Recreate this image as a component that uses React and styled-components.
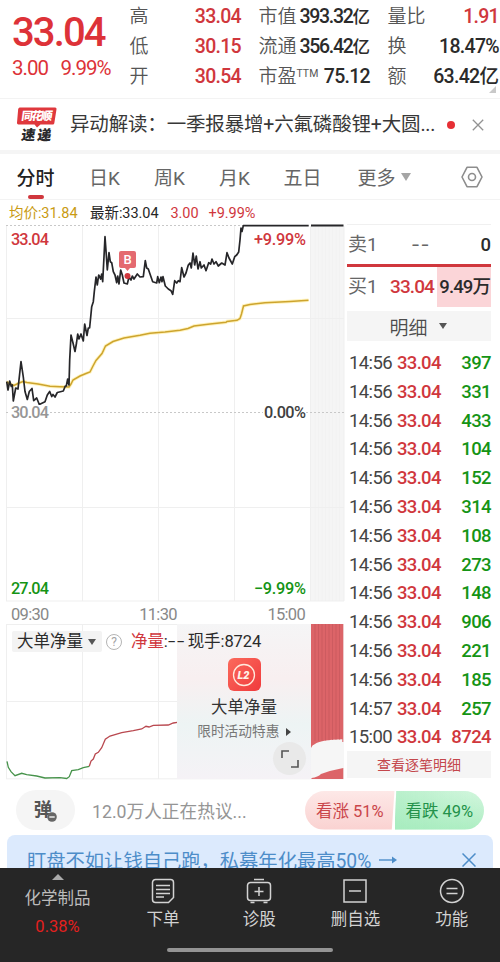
import React from 'react';
import styled, { createGlobalStyle } from 'styled-components';

const RED = '#d0373d';
const GREEN = '#159415';

const quotes = [
    [
        { label: '高', value: '33.04', color: RED },
        { label: '低', value: '30.15', color: RED },
        { label: '开', value: '30.54', color: RED },
    ],
    [
        { label: '市值', value: '393.32', unit: '亿', tight: true },
        { label: '流通', value: '356.42', unit: '亿', tight: true },
        { label: '市盈', sup: 'TTM', value: '75.12' },
    ],
    [
        { label: '量比', value: '1.91', color: RED },
        { label: '换', value: '18.47%' },
        { label: '额', value: '63.42', unit: '亿' },
    ],
];

const trades = [
    ['14:56', '397'], ['14:56', '331'], ['14:56', '433'], ['14:56', '104'],
    ['14:56', '152'], ['14:56', '314'], ['14:56', '108'], ['14:56', '273'],
    ['14:56', '148'], ['14:56', '906'], ['14:56', '221'], ['14:56', '185'],
    ['14:57', '257'], ['15:00', '8724'],
];

const pricePoints = `6.7,381.7 8,390 9.7,381 11.3,386.5 12.3,385 13.3,401 15.7,388 18,389 21,361.5 23.3,377 25,391.5
27.3,399.5 29.3,391.5 32,388.5 33.7,400.7 36.7,398 39.3,404.5 45,401.7 47.3,395 49.7,391.5 51.7,396.5 53,394.5 55,397
57.3,392.5 63.3,391 65.3,386 66.3,386 67.7,379 69,385 69.7,360 71,335 73,343 75,351.5 76.5,343 77.7,334 79,339 81,334
83.3,341 84.7,324 87,335.5 88.3,328 89.6,328 90.7,317 91.7,306.7 93.3,301.7 94.3,291.7 96,277 97.3,285 98.7,275
100.7,279 101.7,274 102.7,281.7 104,256.7 105,236.7 106.3,255 107.3,270 109,252.7 110.3,261.7 111.7,262.7 113.3,271.7
115,275 116.7,282.7 117.7,276 119,284 120.7,270 122.3,275 124,283 127.3,284 129,277 131,280 132.3,276 134,279
137.3,274 140,277 143.3,276.7 145.3,260.7 146.7,268 148.3,269 150.7,276 152.7,281.7 156.7,283 157.7,276.7
159.3,282.7 161,277 162,281.7 163,276.7 165.3,286 168.3,289 171,290.7 172.7,294.3 174.7,280.7 176.7,283 178.3,280.7
180,281.7 181.7,267.7 184,277 186,273 188.3,265 190,263 191.3,268 193,253 194.7,265 196.3,256 198,269 200,261.7
201.3,268 204,265 206,270.7 208.7,262.7 210.7,264 212,259 214,264 216,261.7 218.3,266 221.7,263 225,265 227,252.7
229,258 232.3,264 234.7,256.7 236.7,255 238.7,252 240,240 241,228 242,231.5 243.3,225.6 308.7,225.6`;

const averagePoints = `6.7,381.7 9,383.5 14,385.5 19,383 23,381.5 27,382.5 38,384 50,386.3 60,386.7 69,387 71,384 73,380
80,376 86,373.5 90,372 93,366 96,360.5 102,353.5 105.5,346 113,341.5 124,338 140,335.3 150,333.3 165,332 180,330.3
188,328.5 194,326 210,324 226,322.3 227,321.5 237,320.3 240,318.5 241.5,314 243.5,306 250,304.5 265,302.7 290,301.5 308.5,300.3`;

const netGreen = `7,761.3 8.3,767.3 11,771.7 15,775.7 21.7,773.3 26.7,774.7 36.7,776 45,778 60,777.7 66.7,778.5 69.3,776.7
71.7,770.7 78.3,769.7 83.3,767.7 89.3,766.3`;

const netRed = `89.3,766.3 91,761 93.3,759 95.3,754 98.3,752.3 101.7,747.7 105.3,739.3 110,736 121.7,732.7 133.3,730.7
141.7,729 146,726.3 149,727 153.3,725.3 168.3,725 173.3,723 177.3,722.3`;

const stripes = [315, 318.5, 322, 325.5, 329, 332.5, 336, 339.5];

function PriceChart() {
    return (
        <Plot viewBox="0 225 345 376" height="376">
            <rect x="311" y="226" width="33" height="375" fill="#f5f5f5" />
            {stripes.map(x => <path key={x} d={`M${x} 227V601`} stroke="#f1f1f1" strokeWidth=".8" />)}
            <g stroke="#efefef" strokeWidth="1">
                {[6.5, 82.5, 158.5, 234.5, 310.5, 344].map(x => <path key={x} d={`M${x} 226V601`} />)}
                <path d="M6 318.5H344M6 507.5H344M6 601H344" />
            </g>
            <g stroke="#c8c8c8" strokeDasharray="2 2">
                <path d="M6 225.5H244" />
                <path d="M6 412.5H344" />
            </g>
            <polyline points={averagePoints} fill="none" stroke="#fff3bf" strokeWidth="3.4" />
            <polyline points={averagePoints} fill="none" stroke="#cda42e" strokeWidth="1.5" />
            <polyline points={pricePoints} fill="none" stroke="#262629" strokeWidth="1.7" strokeLinejoin="round" />
            <path d="M311 225.6H343.5" stroke="#262629" strokeWidth="2" />
            <circle cx="127.5" cy="276" r="3" fill={RED} />
            <path d="M121 251h13a2 2 0 0 1 2 2v13a2 2 0 0 1-2 2h-4l-2.5 3-2.5-3h-4a2 2 0 0 1-2-2v-13a2 2 0 0 1 2-2z" fill="#e46a70" />
            <ChartText x="127.5" y="264.2" $size={13} textAnchor="middle" fill="#fff">B</ChartText>
            <ChartText x="11" y="245" textLength="38" fill={RED}>33.04</ChartText>
            <ChartText x="306" y="245" textLength="52" textAnchor="end" fill={RED}>+9.99%</ChartText>
            <rect x="10" y="405" width="40" height="14" fill="#fff" />
            <rect x="263" y="405" width="43" height="14" fill="#fff" />
            <ChartText x="11" y="417.5" textLength="38" fill="#969696">30.04</ChartText>
            <ChartText x="306" y="417.5" textLength="42" textAnchor="end" fill="#404040">0.00%</ChartText>
            <ChartText x="11" y="594" textLength="38" fill={GREEN}>27.04</ChartText>
            <ChartText x="306" y="594" textLength="52" textAnchor="end" fill={GREEN}>−9.99%</ChartText>
        </Plot>
    );
}

function NetChart() {
    return (
        <Plot viewBox="0 624 345 155" height="155">
            <g stroke="#efefef">
                {[6.5, 82.5, 158.5].map(x => <path key={x} d={`M${x} 624V779`} />)}
                <path d="M6 624.5H178M6 701.5H178M6 778.8H344" />
            </g>
            <rect x="311" y="624" width="33" height="155" fill="#f6f6f6" />
            <path d="M311 624H343.3V742H342.3V739.3Q320 740 315 744Q312 745 311 748Z" fill="#dc6468" />
            <path d="M311.5 779V778Q318 777 321 774Q332 770 343.3 768V779Z" fill="#dc6468" />
            {stripes.map((x, i) => (
                <path key={x} d={`M${x} 624V${741 - i * 0.2}`} stroke="#c5585d" strokeWidth=".7" />
            ))}
            <polyline points={netGreen} fill="none" stroke="#47934b" strokeWidth="1.3" />
            <polyline points={netRed} fill="none" stroke="#b9484f" strokeWidth="1.3" />
        </Plot>
    );
}

function NewsLogo() {
    return (
        <svg width="42" height="38" viewBox="0 0 42 38">
            <path d="M3.5 1.5H39a1.5 1.5 0 0 1 1.5 1.8L38.3 17.2a1.5 1.5 0 0 1-1.5 1.3H24.5L21 21.5 18.5 18.5H2.5A1.5 1.5 0 0 1 1 16.8L2.2 2.8z" fill="#df383d" />
            <LogoText x="7" y="14.5" textLength="31" fontSize="11.5" transform="skewX(-8)" fill="#fff">同花顺</LogoText>
            <LogoText x="9.5" y="34" textLength="30" fontSize="14" transform="skewX(-8)" fill="#29292b">速递</LogoText>
        </svg>
    );
}

const navItems = [
    {
        text: '下单',
        icon: <path d="M4.5 1.5h15a3 3 0 0 1 3 3v15l-5 5h-13a3 3 0 0 1-3-3v-17a3 3 0 0 1 3-3zM5 7.5h14M5 11.5h14M5 15.5h14M5 19h8" />,
    },
    {
        text: '诊股',
        icon: <path d="M3.5 4.5h17a3 3 0 0 1 3 3v12a3 3 0 0 1-3 3h-17a3 3 0 0 1-3-3v-12a3 3 0 0 1 3-3zM7 1.5h10M3.5 24.5h4M16.5 24.5h4M12 9v9M7.5 13.5h9" />,
    },
    {
        text: '删自选',
        icon: <path d="M1 2h22v22H1zM6 13h12" />,
    },
    {
        text: '功能',
        icon: <path d="M12 1.5a11.5 11.5 0 1 1 0 23 11.5 11.5 0 0 1 0-23zM6.5 10.5h11M6.5 15.5h11" />,
    },
];

export default function App() {
    return (
        <Page>
            <GlobalStyle />
            <Header>
                <Current>
                    <BigPrice>33.04</BigPrice>
                    <Change><span>3.00</span><span>9.99%</span></Change>
                </Current>
                {quotes.map((column, i) => (
                    <QuoteColumn key={i}>
                        {column.map(q => (
                            <QuoteRow key={q.label}>
                                <QuoteLabel>{q.label}{q.sup && <sup>{q.sup}</sup>}</QuoteLabel>
                                <QuoteValue $color={q.color} $tight={q.tight}>{q.value}{q.unit && <em>{q.unit}</em>}</QuoteValue>
                            </QuoteRow>
                        ))}
                    </QuoteColumn>
                ))}
                <Corner />
            </Header>

            <News>
                <NewsLogo />
                <NewsText>异动解读：一季报暴增+六氟磷酸锂+大圆...</NewsText>
                <Dot />
                <svg width="12" height="12" viewBox="0 0 12 12" stroke="#929292" strokeWidth="1.3">
                    <path d="M.8.8l10.4 10.4M11.2.8L.8 11.2" />
                </svg>
            </News>

            <Tabs>
                <Tab $w={71} $active>分时</Tab>
                <Tab $w={67}>日K</Tab>
                <Tab $w={63}>周K</Tab>
                <Tab $w={67}>月K</Tab>
                <Tab $w={69}>五日</Tab>
                <Tab $w={94}>更多<Triangle $size={5.5} $color="#a5a5a5" /></Tab>
                <Settings>
                    <svg width="22" height="22" viewBox="0 0 22 22" fill="none" stroke="#8d8d8d" strokeWidth="1.6">
                        <path d="M6 1.3h10L21 11l-5 9.7H6L1 11z" strokeLinejoin="round" />
                        <circle cx="11" cy="11" r="3.5" />
                    </svg>
                </Settings>
            </Tabs>

            <Main>
                <Charts>
                    <Summary>
                        <SummaryItem $w={81} $color="#c99b12">均价:31.84</SummaryItem>
                        <SummaryItem $w={80.5} $color="#262626">最新:33.04</SummaryItem>
                        <SummaryItem $w={38} $color={RED}>3.00</SummaryItem>
                        <SummaryItem $color={RED}>+9.99%</SummaryItem>
                    </Summary>
                    <PriceChart />
                    <TimeAxis><span>09:30</span><span>11:30</span><span>15:00</span></TimeAxis>
                    <NetPanel>
                        <NetChart />
                        <Promo>
                            <PromoIcon>
                                <svg width="24" height="24" viewBox="0 0 24 24">
                                    <circle cx="12" cy="12" r="10.5" fill="none" stroke="#ffe9dc" strokeWidth="1.3" />
                                    <text x="11.5" y="16" textAnchor="middle" fontSize="11" fontWeight="900" fontStyle="italic" fill="#fff2e8">L2</text>
                                </svg>
                            </PromoIcon>
                            <PromoTitle>大单净量</PromoTitle>
                            <PromoNote>限时活动特惠 <i /></PromoNote>
                            <Expand>
                                <svg width="18" height="18" viewBox="0 0 18 18" fill="none" stroke="#555" strokeWidth="1.6">
                                    <path d="M1 8V1h7M17 10v7h-7" />
                                </svg>
                            </Expand>
                        </Promo>
                        <NetHead>
                            <Picker>大单净量<Triangle $size={4.5} $color="#555" /></Picker>
                            <Help>?</Help>
                            <NetLabel><b>净量</b>:<u>--</u>现手:8724</NetLabel>
                        </NetHead>
                    </NetPanel>
                </Charts>

                <Book>
                    <SellRow>
                        <Side>卖1</Side><Dashes>--</Dashes><Amount>0</Amount>
                    </SellRow>
                    <BookRow>
                        <Side>买1</Side><BidPrice>33.04</BidPrice><Amount $hot>9.49万</Amount>
                    </BookRow>
                    <DetailTab>明细<Triangle $size={4} $color="#555" /></DetailTab>
                    <TradeList>
                        {trades.map(([time, volume], i) => (
                            <Trade key={i}>
                                <span>{time}</span>
                                <TradePrice>33.04</TradePrice>
                                <Volume $buy={volume === '8724'}>{volume}</Volume>
                            </Trade>
                        ))}
                    </TradeList>
                    <AllTrades>查看逐笔明细</AllTrades>
                </Book>
            </Main>

            <Talk>
                <Bullet>
                    弹
                    <svg width="10" height="10" viewBox="0 0 10 10">
                        <circle cx="5" cy="5" r="4.8" fill="#666" /><path d="M2.3 5h5.4" stroke="#fff" strokeWidth="1.3" />
                    </svg>
                </Bullet>
                <TalkText>12.0万人正在热议...</TalkText>
                <Votes>
                    <Vote $up>看涨 51%</Vote>
                    <Vote>看跌 49%</Vote>
                </Votes>
            </Talk>

            <Banner>
                <span>盯盘不如让钱自己跑，私募年化最高50%</span>
                <svg width="19" height="10" viewBox="0 0 19 10" fill="none" stroke="#4d8dc9" strokeWidth="1.4">
                    <path d="M0 5h16" /><path d="M13 1.5L18 5l-5 3.5z" fill="#4d8dc9" stroke="none" />
                </svg>
                <BannerClose width="14" height="14" viewBox="0 0 14 14" stroke="#4d8dc9" strokeWidth="1.5">
                    <path d="M.5.5l13 13M13.5.5l-13 13" />
                </BannerClose>
            </Banner>

            <Nav>
                <Sector>
                    <Triangle $size={6} $color="#aaa" $up />
                    <span>化学制品</span>
                    <strong>0.38%</strong>
                </Sector>
                {navItems.map(item => (
                    <NavItem key={item.text}>
                        <svg width="26" height="27" viewBox="-1 0 26 27" fill="none" stroke="#d2d2d2" strokeWidth="1.5">{item.icon}</svg>
                        <span>{item.text}</span>
                    </NavItem>
                ))}
                <HomeBar />
            </Nav>
        </Page>
    );
}

const GlobalStyle = createGlobalStyle`
    * { box-sizing: border-box; }
    body {
        margin: 0;
        background: #fff;
        font-family: Roboto, "Noto Sans CJK SC", sans-serif;
    }
    svg { display: block; flex: none; }
`

const Page = styled("div")`
    width: 500px;
    height: 962px;
    overflow: hidden;
    display: flex;
    flex-direction: column;
    background: #fff;
    white-space: nowrap;
`

const Header = styled("div")`
    position: relative;
    display: flex;
    flex: none;
    height: 99px;
    gap: 17.5px;
    padding: 2px 1px 0 12px;
    border-bottom: 1px solid #f3f3f3;
`

const Current = styled("div")`
    width: 100px;
    color: #dd3238;
`

const BigPrice = styled("div")`
    margin-top: 8px;
    font-size: 40px;
    line-height: 46px;
    font-weight: 500;
    letter-spacing: -1.9px;
`

const Change = styled("div")`
    display: flex;
    gap: 12.5px;
    font-size: 20.5px;
    line-height: 24px;
    letter-spacing: -1px;
`

const QuoteColumn = styled("div")`
    width: 111.5px;
`

const QuoteRow = styled("div")`
    display: flex;
    justify-content: space-between;
    height: 30px;
    line-height: 30px;
`

const QuoteLabel = styled("span")`
    font-size: 19px;
    font-weight: 350;
    color: #555;
    sup {
        font-size: 10.5px;
        line-height: 1;
        vertical-align: 6px;
        font-weight: 400;
    }
`

const QuoteValue = styled("span")`
    font-size: 19.5px;
    font-weight: 500;
    letter-spacing: ${p => p.$tight ? '-1.3px' : '-0.7px'};
    color: ${p => p.$color || '#2b2b2b'};
    em {
        font-style: normal;
        font-size: ${p => p.$tight ? '17.5px' : '19.5px'};
        letter-spacing: 0;
    }
`

const Corner = styled("i")`
    position: absolute;
    right: 4px;
    bottom: 5px;
    border-left: 7px solid transparent;
    border-bottom: 7px solid #c9c9c9;
`

const News = styled("div")`
    display: flex;
    flex: none;
    align-items: center;
    height: 55px;
    padding: 0 16px;
    border-bottom: 4px solid #f5f5f5;
`

const LogoText = styled("text")`
    font-weight: 900;
`

const NewsText = styled("div")`
    width: 377px;
    margin-left: 12px;
    font-size: 19.5px;
    line-height: 32px;
    font-weight: 400;
    letter-spacing: -0.17px;
    color: #383838;
`

const Dot = styled("i")`
    flex: none;
    width: 8px;
    height: 8px;
    margin-right: 17px;
    border-radius: 50%;
    background: #e62f35;
`

const Tabs = styled("div")`
    display: flex;
    flex: none;
    align-items: center;
    height: 46px;
    border-bottom: 1px solid #f3f3f3;
`

const Tab = styled("div")`
    position: relative;
    display: flex;
    justify-content: center;
    align-items: center;
    gap: 5px;
    width: ${p => p.$w}px;
    height: 46px;
    font-size: 19px;
    font-weight: ${p => p.$active ? 500 : 400};
    color: ${p => p.$active ? '#222' : '#666'};
    &::after {
        content: "";
        display: ${p => p.$active ? 'block' : 'none'};
        position: absolute;
        bottom: 1px;
        width: 16px;
        height: 4px;
        border-radius: 2px;
        background: ${RED};
    }
`

const Triangle = styled("i")`
    border: ${p => p.$size}px solid transparent;
    border-top: ${p => p.$up ? '0' : `${p.$size * 1.5}px solid ${p.$color}`};
    border-bottom: ${p => p.$up ? `${p.$size * 1.1}px solid ${p.$color}` : '0'};
`

const Settings = styled("div")`
    margin-left: 30px;
`

const Main = styled("div")`
    display: flex;
    flex: none;
    height: 579px;
    gap: 2px;
`

const Charts = styled("div")`
    width: 345px;
`

const Summary = styled("div")`
    display: flex;
    height: 25px;
    padding-left: 9px;
    line-height: 28px;
`

const SummaryItem = styled("span")`
    width: ${p => p.$w ? p.$w + 'px' : 'auto'};
    font-size: 14.5px;
    font-weight: 400;
    letter-spacing: -0.05px;
    color: ${p => p.$color};
`

const Plot = styled("svg")`
    width: 345px;
    overflow: visible;
`

const ChartText = styled("text")`
    font-size: ${p => p.$size || 16.3}px;
    font-weight: 500;
`

const TimeAxis = styled("div")`
    display: flex;
    justify-content: space-between;
    height: 23px;
    padding: 0 40px 0 11px;
    font-size: 16.5px;
    line-height: 27px;
    letter-spacing: -0.7px;
    color: #888;
`

const NetPanel = styled("div")`
    position: relative;
    height: 155px;
`

const NetHead = styled("div")`
    position: absolute;
    top: 7px;
    left: 12px;
    display: flex;
    align-items: center;
    color: #2b2b2b;
    font-size: 16.5px;
    line-height: 21px;
`

const Picker = styled("div")`
    display: flex;
    align-items: center;
    gap: 5px;
    width: 90px;
    padding-left: 5px;
    border-radius: 2px;
    background: #f3f3f3;
`

const Help = styled("div")`
    width: 16px;
    height: 16px;
    margin: 0 9px 0 4px;
    border: 1px solid #b5b5b5;
    border-radius: 50%;
    color: #a5a5a5;
    font-size: 12px;
    line-height: 14px;
    text-align: center;
`

const NetLabel = styled("div")`
    letter-spacing: -0.1px;
    b { font-weight: 400; color: ${RED}; }
    u {
        display: inline-block;
        width: 20px;
        text-decoration: none;
        letter-spacing: 1px;
        transform: scaleX(1.6);
        transform-origin: left;
    }
`

const Promo = styled("div")`
    position: absolute;
    top: 0;
    left: 177px;
    width: 134px;
    height: 155px;
    padding-top: 34px;
    display: flex;
    flex-direction: column;
    align-items: center;
    background: linear-gradient(180deg, #f5f5f6 0%, #f8eff0 35%, #edf4f4 65%, #f5f2f6 100%);
`

const PromoIcon = styled("div")`
    display: flex;
    align-items: center;
    justify-content: center;
    width: 33px;
    height: 33px;
    border-radius: 6px;
    background: linear-gradient(135deg, #fb6a5c, #f03a3c);
`

const PromoTitle = styled("div")`
    margin-top: 4px;
    font-size: 16.5px;
    line-height: 25px;
    color: #333;
`

const PromoNote = styled("div")`
    font-size: 13.7px;
    line-height: 22px;
    font-weight: 400;
    color: #777;
    i {
        display: inline-block;
        margin-left: 3px;
        border: 4px solid transparent;
        border-left: 5px solid #444;
        border-right: 0;
    }
`

const Expand = styled("div")`
    position: absolute;
    right: 5px;
    bottom: 4px;
    display: flex;
    align-items: center;
    justify-content: center;
    width: 33px;
    height: 33px;
    border-radius: 50%;
    background: #e9e9e9;
`

const Book = styled("div")`
    width: 144px;
    padding-top: 24px;
`

const BookRow = styled("div")`
    display: flex;
    align-items: center;
    height: 40px;
    font-size: 19.5px;
    line-height: 38px;
`

const SellRow = styled(BookRow)`
    height: 43px;
    border-top: 1px solid #f0f0f0;
    border-bottom: 3px solid ${RED};
`

const Side = styled("span")`
    width: 43px;
    padding-left: 1px;
    font-size: 19px;
    font-weight: 400;
    color: #666;
`

const Dashes = styled("span")`
    width: 47px;
    padding-left: 22px;
    letter-spacing: 2px;
    color: #666;
    transform: scaleX(1.3);
    transform-origin: 22px;
`

const BidPrice = styled("span")`
    width: 47px;
    font-size: 19px;
    font-weight: 500;
    letter-spacing: -0.9px;
    color: ${RED};
`

const Amount = styled("span")`
    flex: 1;
    align-self: stretch;
    padding-right: 1px;
    font-size: 18.5px;
    font-weight: 500;
    line-height: 40px;
    text-align: right;
    letter-spacing: -0.9px;
    color: #2b2b2b;
    background: ${p => p.$hot ? '#fbd5d8' : 'none'};
`

const DetailTab = styled("div")`
    display: flex;
    align-items: center;
    justify-content: center;
    gap: 11px;
    height: 30px;
    margin-top: 4px;
    padding-right: 2px;
    background: #f5f5f5;
    font-size: 19px;
    font-weight: 350;
    color: #4c4c4c;
`

const TradeList = styled("div")`
    padding: 7px 0 0 2px;
`

const Trade = styled("div")`
    display: flex;
    height: 28.8px;
    line-height: 30px;
    font-size: 18.5px;
    letter-spacing: -0.6px;
    color: #444;
    span:first-child { width: 48px; }
`

const TradePrice = styled("span")`
    font-weight: 500;
    letter-spacing: -0.7px;
    color: ${RED};
`

const Volume = styled("span")`
    flex: 1;
    text-align: right;
    font-weight: 500;
    color: ${p => p.$buy ? RED : GREEN};
`

const AllTrades = styled("div")`
    height: 27px;
    background: #f5f5f5;
    font-size: 14px;
    line-height: 28px;
    text-align: center;
    color: #c4474c;
`

const Talk = styled("div")`
    display: flex;
    flex: none;
    align-items: center;
    height: 56px;
    padding: 6px 16px 0;
`

const Bullet = styled("div")`
    display: flex;
    justify-content: center;
    align-items: center;
    width: 59px;
    height: 40px;
    padding-bottom: 4px;
    border-radius: 20px;
    background: #f5f5f5;
    font-size: 18.5px;
    font-weight: 700;
    color: #555;
    svg { margin: 17px 0 0 -5px; }
`

const TalkText = styled("div")`
    flex: 1;
    padding-left: 17px;
    font-size: 17.7px;
    font-weight: 400;
    color: #959595;
`

const Votes = styled("div")`
    display: flex;
    width: 179px;
    height: 39px;
    border-radius: 20px;
    overflow: hidden;
`

const Vote = styled("div")`
    display: flex;
    align-items: center;
    justify-content: center;
    flex: 1;
    font-size: 16.5px;
    letter-spacing: 0;
    color: ${p => p.$up ? '#ca454a' : '#23924a'};
    background: ${p => p.$up
        ? 'linear-gradient(180deg, #fde8e7, #fad2d1)'
        : 'linear-gradient(90deg, rgba(160,234,186,.5), rgba(190,245,208,0)), linear-gradient(180deg, #d3f6de, #aeeec3)'};
    clip-path: ${p => p.$up ? 'polygon(0 0, 100% 0, 97% 100%, 0 100%)' : 'polygon(2% 0, 100% 0, 100% 100%, 0 100%)'};
`

const Banner = styled("div")`
    display: flex;
    flex: none;
    align-items: center;
    height: 33px;
    margin: 0 7px;
    padding: 17px 17px 0 20px;
    border-radius: 8px 8px 0 0;
    background: #dceafd;
    font-size: 19.3px;
    line-height: 28px;
    font-weight: 400;
    color: #4d8dc9;
    svg { margin-left: 8px; }
    span { margin-top: 3px; }
`

const BannerClose = styled("svg")`
    && { margin-left: auto; }
`

const Nav = styled("div")`
    position: relative;
    display: flex;
    flex: none;
    height: 94px;
    background: #262626;
    color: #d2d2d2;
    font-size: 16.5px;
    line-height: 24px;
`

const Sector = styled("div")`
    display: flex;
    flex-direction: column;
    align-items: center;
    width: 115px;
    padding-top: 6px;
    span { margin-top: 7px; color: #bbb; }
    strong { margin-top: 4px; color: #e3201e; font-size: 16.5px; font-weight: 400; }
`

const NavItem = styled("div")`
    display: flex;
    flex-direction: column;
    align-items: center;
    width: 96.2px;
    padding-top: 10px;
    span { margin-top: 3px; }
`

const HomeBar = styled("i")`
    position: absolute;
    left: 167px;
    bottom: 10px;
    width: 166px;
    height: 4px;
    border-radius: 2px;
    background: #949494;
`
